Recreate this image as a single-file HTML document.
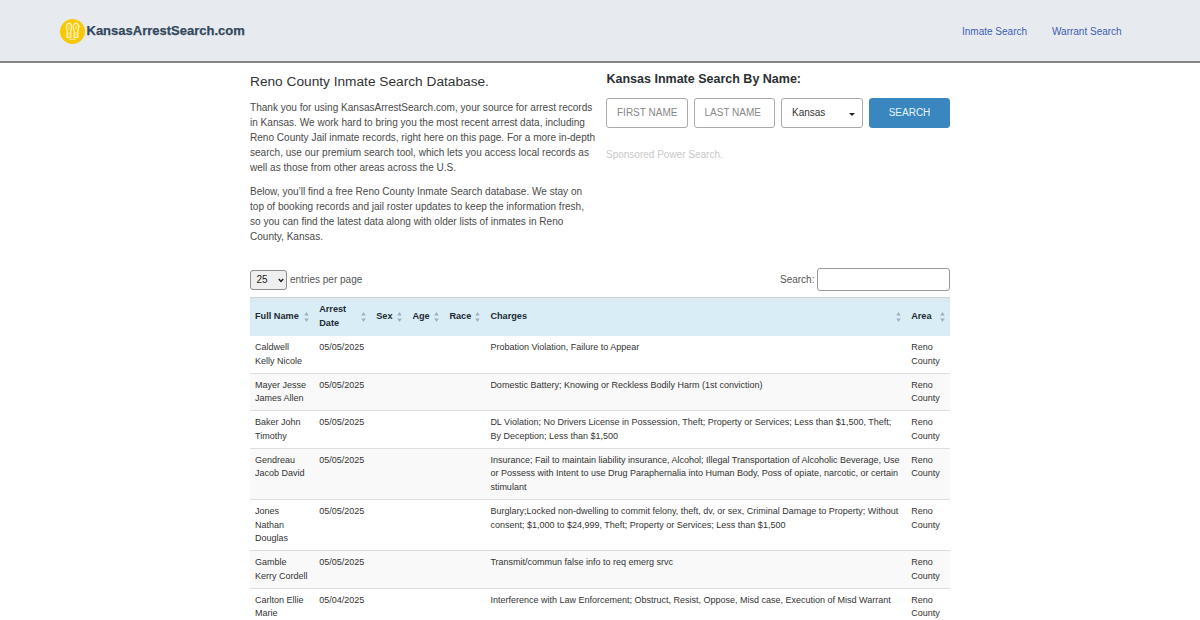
<!DOCTYPE html>
<html><head><meta charset="utf-8">
<style>
*{box-sizing:border-box;margin:0;padding:0}
html,body{width:1200px;height:620px;overflow:hidden;background:#fff;font-family:"Liberation Sans",sans-serif;color:#333}
#hdr{position:absolute;left:0;top:0;width:1200px;height:63px;background:#e7ebef;border-bottom:2px solid #858585}
#logo{position:absolute;left:59.9px;top:18.8px;width:25px;height:25px}
#logotxt{position:absolute;left:86.5px;top:22.5px;font-size:13px;font-weight:bold;color:#34495e;-webkit-text-stroke:0.25px #34495e;line-height:16px;letter-spacing:0}
.nav{position:absolute;top:25px;font-size:10px;line-height:13px;color:#3f5db3}
#n1{left:962px}#n2{left:1052px}
#h1{position:absolute;left:250px;top:73px;font-size:13.7px;line-height:18px;color:#333;font-weight:normal}
.p{position:absolute;left:250px;width:347px;font-size:10.06px;line-height:15px;color:#4a4a4a}
#p1{top:100px}
#p2{top:184px}
#h2{position:absolute;left:606.5px;top:70.5px;font-size:12.5px;line-height:16px;font-weight:bold;color:#2b2f33}
.box{position:absolute;top:98.2px;height:29.5px;border:1px solid #aaa;border-radius:3px;background:#fff;font-size:10px;line-height:27.5px}
#b1{left:606px;width:82px;color:#888;padding-left:10px}
#b2{left:693.5px;width:81.5px;color:#888;padding-left:10px}
#b3{left:781px;width:82px;color:#333;padding-left:10px}
#b4{left:869px;width:81px;background:#3a87c0;border-color:#3a87c0;color:#e8f3fb;text-align:center}
#caret{position:absolute;left:849.2px;top:112.8px;width:0;height:0;border-left:3.8px solid transparent;border-right:3.8px solid transparent;border-top:3.8px solid #222}
#spons{position:absolute;left:606px;top:148px;font-size:10px;line-height:14px;color:#c8c8c8}
#len{position:absolute;left:250px;top:270px;width:36.8px;height:19.6px;border:1px solid #8e8e8e;border-radius:3px;background:#efefef;font-size:10px;line-height:18px;padding-left:5.5px;color:#222}
#lenchev{position:absolute;left:278px;top:277.6px}
#lentxt{position:absolute;left:290px;top:273px;font-size:10px;line-height:13px;color:#555}
#stxt{position:absolute;left:780px;top:273px;font-size:10px;line-height:13px;color:#555}
#sbox{position:absolute;left:816.8px;top:267.8px;width:133.2px;height:23px;border:1px solid #999;border-radius:3px;background:#fff}
table{position:absolute;left:250px;top:297px;width:700px;border-collapse:collapse;table-layout:fixed;font-size:9.17px;line-height:13.75px}
th{background:linear-gradient(#dde6ec 0,#dce9f1 2px,#d9edf7 4px);text-align:left;font-weight:bold;color:#1e2a33;padding:0 15px 0 5px;height:38.6px;position:relative;vertical-align:middle;border-top:1px solid #c9d6de}
th .s{position:absolute;right:5.5px;top:50%;margin-top:-5px;width:5px;height:10px}
td{font-size:9px;padding:5px 5px 4px 5px;vertical-align:top;color:#333;border-top:1px solid #ddd}
tbody tr:first-child td{border-top:none;padding-top:5px}
tbody tr:nth-child(even) td{background:#f9f9f9}
</style></head><body>
<div id="hdr"></div>
<svg id="logo" viewBox="0 0 25 25"><circle cx="12.5" cy="12.5" r="12.5" fill="#f8c805"/>
<g fill="none" stroke="#fff2b3" stroke-width="1.4" stroke-linecap="round" stroke-linejoin="round">
<path d="M6.4 8.2 C6.4 5.4 7.5 4.2 9 4.2 C10.5 4.2 11.6 5.4 11.6 8.2 C11.6 10 10.9 11.2 10.7 12.2 L10.9 18.4 L7.1 18.4 L7.3 12.2 C7.1 11.2 6.4 10 6.4 8.2Z"/>
<path d="M13.4 8.2 C13.4 5.4 14.5 4.2 16 4.2 C17.5 4.2 18.6 5.4 18.6 8.2 C18.6 10 17.9 11.2 17.7 12.2 L17.9 18.4 L14.1 18.4 L14.3 12.2 C14.1 11.2 13.4 10 13.4 8.2Z"/>
<path d="M9 6.8 L9 10.2 M16 6.8 L16 10.2 M9 13.5 L9 16.5 M16 13.5 L16 16.5 M18.8 7 L19.9 7.4" stroke-width="0.9"/>
<path d="M9.6 20.3 L15.4 20.3" stroke-dasharray="1 0.5" stroke-width="1.1"/>
</g></svg>
<div id="logotxt">KansasArrestSearch.com</div>
<div class="nav" id="n1">Inmate Search</div>
<div class="nav" id="n2">Warrant Search</div>

<div id="h1">Reno County Inmate Search Database.</div>
<div class="p" id="p1">Thank you for using KansasArrestSearch.com, your source for arrest records in Kansas. We work hard to bring you the most recent arrest data, including Reno County Jail inmate records, right here on this page. For a more in-depth search, use our premium search tool, which lets you access local records as well as those from other areas across the U.S.</div>
<div class="p" id="p2">Below, you’ll find a free Reno County Inmate Search database. We stay on top of booking records and jail roster updates to keep the information fresh, so you can find the latest data along with older lists of inmates in Reno County, Kansas.</div>

<div id="h2">Kansas Inmate Search By Name:</div>
<div class="box" id="b1">FIRST NAME</div>
<div class="box" id="b2">LAST NAME</div>
<div class="box" id="b3">Kansas</div>
<div id="caret"></div>
<div class="box" id="b4">SEARCH</div>
<div id="spons">Sponsored Power Search.</div>

<div id="len">25</div>
<svg id="lenchev" width="6" height="5" viewBox="0 0 6 5"><path d="M0.8 1 L3 3.4 L5.2 1" fill="none" stroke="#222" stroke-width="1.5"/></svg>
<div id="lentxt">entries per page</div>
<div id="stxt">Search:</div>
<div id="sbox"></div>

<table>
<colgroup><col style="width:64.2px"><col style="width:57px"><col style="width:36.2px"><col style="width:37px"><col style="width:41px"><col style="width:420.8px"><col style="width:43.8px"></colgroup>
<thead><tr>
<th>Full Name<svg class="s" viewBox="0 0 5 10"><path d="M2.5 0 L4.8 3.4 L0.2 3.4Z M0.2 6.6 L4.8 6.6 L2.5 10Z" fill="#a0b1bc"/></svg></th>
<th>Arrest Date<svg class="s" viewBox="0 0 5 10"><path d="M2.5 0 L4.8 3.4 L0.2 3.4Z M0.2 6.6 L4.8 6.6 L2.5 10Z" fill="#a0b1bc"/></svg></th>
<th>Sex<svg class="s" viewBox="0 0 5 10"><path d="M2.5 0 L4.8 3.4 L0.2 3.4Z M0.2 6.6 L4.8 6.6 L2.5 10Z" fill="#a0b1bc"/></svg></th>
<th>Age<svg class="s" viewBox="0 0 5 10"><path d="M2.5 0 L4.8 3.4 L0.2 3.4Z M0.2 6.6 L4.8 6.6 L2.5 10Z" fill="#a0b1bc"/></svg></th>
<th>Race<svg class="s" viewBox="0 0 5 10"><path d="M2.5 0 L4.8 3.4 L0.2 3.4Z M0.2 6.6 L4.8 6.6 L2.5 10Z" fill="#a0b1bc"/></svg></th>
<th>Charges<svg class="s" viewBox="0 0 5 10"><path d="M2.5 0 L4.8 3.4 L0.2 3.4Z M0.2 6.6 L4.8 6.6 L2.5 10Z" fill="#a0b1bc"/></svg></th>
<th>Area<svg class="s" viewBox="0 0 5 10"><path d="M2.5 0 L4.8 3.4 L0.2 3.4Z M0.2 6.6 L4.8 6.6 L2.5 10Z" fill="#a0b1bc"/></svg></th>
</tr></thead>
<tbody>
<tr><td>Caldwell Kelly Nicole</td><td>05/05/2025</td><td></td><td></td><td></td><td>Probation Violation, Failure to Appear</td><td>Reno County</td></tr>
<tr><td>Mayer Jesse James Allen</td><td>05/05/2025</td><td></td><td></td><td></td><td>Domestic Battery; Knowing or Reckless Bodily Harm (1st conviction)</td><td>Reno County</td></tr>
<tr><td>Baker John Timothy</td><td>05/05/2025</td><td></td><td></td><td></td><td>DL Violation; No Drivers License in Possession, Theft; Property or Services; Less than $1,500, Theft; By Deception; Less than $1,500</td><td>Reno County</td></tr>
<tr><td>Gendreau Jacob David</td><td>05/05/2025</td><td></td><td></td><td></td><td>Insurance; Fail to maintain liability insurance, Alcohol; Illegal Transportation of Alcoholic Beverage, Use or Possess with Intent to use Drug Paraphernalia into Human Body, Poss of opiate, narcotic, or certain stimulant</td><td>Reno County</td></tr>
<tr><td>Jones Nathan Douglas</td><td>05/05/2025</td><td></td><td></td><td></td><td>Burglary;Locked non-dwelling to commit felony, theft, dv, or sex, Criminal Damage to Property; Without consent; $1,000 to $24,999, Theft; Property or Services; Less than $1,500</td><td>Reno County</td></tr>
<tr><td>Gamble Kerry Cordell</td><td>05/05/2025</td><td></td><td></td><td></td><td>Transmit/commun false info to req emerg srvc</td><td>Reno County</td></tr>
<tr><td>Carlton Ellie Marie</td><td>05/04/2025</td><td></td><td></td><td></td><td>Interference with Law Enforcement; Obstruct, Resist, Oppose, Misd case, Execution of Misd Warrant</td><td>Reno County</td></tr>
</tbody>
</table>
</body></html>
